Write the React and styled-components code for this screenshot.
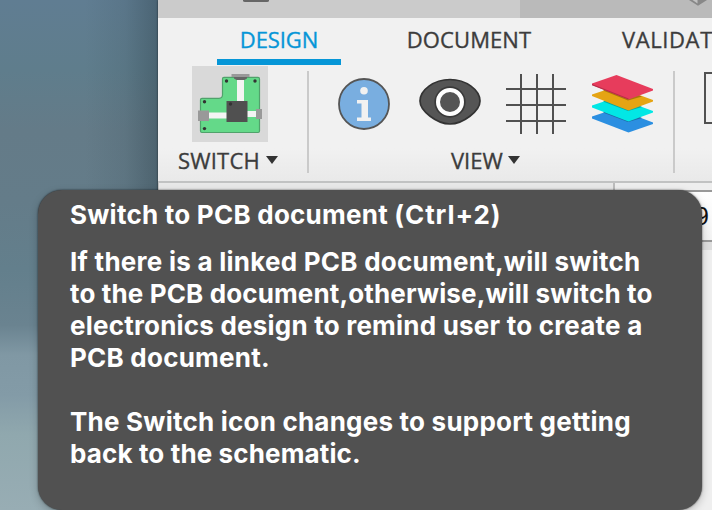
import React from 'react';
import styled, { createGlobalStyle } from 'styled-components';

const GlobalStyle = createGlobalStyle`
  * { box-sizing: border-box; }
  body { margin: 0; overflow: hidden; }
`;

const Desktop = styled.div`
  position: relative;
  display: flex;
  width: 712px;
  height: 510px;
  overflow: hidden;
  font-family: 'Open Sans', 'Noto Sans', sans-serif;
  color: #3c3c3c;
  background:
    linear-gradient(90deg, rgba(45, 65, 75, 0) 85px, rgba(45, 65, 75, 0.12) 125px, rgba(45, 65, 75, 0.42) 158px),
    linear-gradient(180deg, #607d92 0, #5f7d8c 70px, #647b88 130px, #647c89 200px, #637f8c 270px, #6a8390 325px, #8098a4 355px, #839ba7 395px, #90a8ae 435px, #98adb4 510px);
`;

const Window = styled.div`
  display: flex;
  flex-direction: column;
  width: 554px;
  height: 510px;
  margin-left: auto;
  background: #efefef;
  box-shadow: 0 0 2px rgba(0, 0, 0, 0.6);
`;

const TitleBar = styled.div`
  display: flex;
  height: 18px;
  flex: none;
  overflow: hidden;
`;

const TitleTab = styled.div`
  display: flex;
  width: ${(p) => p.$width}px;
  padding-left: ${(p) => p.$inset}px;
  background: ${(p) => (p.$active ? '#cbcbcb' : '#bababa')};
`;

const Ribbon = styled.div`
  display: flex;
  flex-direction: column;
  height: 163px;
  flex: none;
  overflow: hidden;
  background: linear-gradient(180deg, #f1f1f1 80%, #e9e9e9 100%);
  -webkit-text-stroke: 0.35px currentColor;
`;

const TabList = styled.div`
  display: flex;
  height: 47px;
  flex: none;
  padding-left: 59px;
`;

const Tab = styled.div`
  flex: none;
  width: ${(p) => p.$width}px;
  height: 47px;
  margin-right: ${(p) => p.$gap}px;
  padding-top: 6px;
  text-align: ${(p) => p.$align || 'center'};
  font-size: 22px;
  line-height: 31px;
  letter-spacing: ${(p) => p.$spacing || 0}px;
  white-space: nowrap;
  color: ${(p) => (p.$active ? '#0696d7' : '#3c3c3c')};
  border-bottom: 6px solid ${(p) => (p.$active ? '#0696d7' : 'transparent')};
`;

const Groups = styled.div`
  display: flex;
  height: 116px;
  flex: none;
`;

const Group = styled.div`
  display: flex;
  flex-direction: column;
  flex: none;
  width: ${(p) => p.$width}px;
  padding: 1px 0 0 ${(p) => p.$inset}px;
`;

const IconRow = styled.div`
  display: flex;
  align-items: center;
  height: 76px;
`;

const SwitchButton = styled.button`
  display: block;
  width: 76px;
  height: 76px;
  padding: 0;
  border: 0;
  background: #d9d9d9;
`;

const Icon = styled.svg`
  display: block;
  flex: none;
  margin-left: ${(p) => p.$gap || 0}px;
  margin-bottom: ${(p) => p.$lift || 0}px;
`;

const GroupLabel = styled.div`
  display: flex;
  align-items: center;
  gap: ${(p) => p.$gap}px;
  margin: 3px 0 0 ${(p) => p.$shift}px;
  font-size: 22px;
  line-height: 31px;
  letter-spacing: ${(p) => p.$spacing || 0}px;
`;

const Caret = styled.span`
  width: 0;
  height: 0;
  margin-top: -1px;
  border: solid transparent;
  border-width: 8px 6px 0;
  border-top-color: #333;
`;

const Divider = styled.div`
  flex: none;
  width: 2px;
  height: 102px;
  margin-top: 6px;
  background: #cacaca;
`;

const Workspace = styled.div`
  display: flex;
  height: 69px;
  flex: none;
  border-top: 2px solid #c1c2c2;
`;

const BrowserPanel = styled.div`
  width: 457px;
  border-right: 2px solid #bcbcbc;
  border-left: 1px solid #c4c4c4;
  background: #e8e8e8;
`;

const CommandBar = styled.div`
  flex: 1;
  padding-top: 7px;
  background: linear-gradient(180deg, #eeeeee 59px, #dedede 59px);
`;

const CommandField = styled.div`
  display: flex;
  justify-content: flex-end;
  height: 52px;
  padding: 10px 3px 0 0;
  border: solid #999;
  border-width: 2px 0;
  background: linear-gradient(180deg, #fff, #f3f3f3);
  color: #111;
  font-family: 'Liberation Sans', Arial, sans-serif;
  font-size: 25px;
  line-height: 29px;
`;

const Tooltip = styled.div`
  position: absolute;
  left: 38px;
  top: 190px;
  width: 664px;
  height: 320px;
  padding: 9px 0 0 32px;
  border-radius: 24px;
  background: #515151;
  box-shadow: 0 0 2px rgba(0, 0, 0, 0.7), 0 3px 9px rgba(0, 0, 0, 0.22);
  color: #fff;
  font-family: Inter, sans-serif;
  font-size: 26px;
  font-weight: 700;
  line-height: 32px;
  white-space: nowrap;
`;

const TooltipTitle = styled.div`
  margin-bottom: 15px;
  letter-spacing: 0.24px;
`;

const Shortcut = styled.span`
  letter-spacing: 0.9px;
`;

const Paragraph = styled.div`
  margin-bottom: 32px;
`;

const Line = styled.div`
  letter-spacing: ${(p) => p.$spacing}px;
`;

const PcbIcon = () => (
  <Icon width="76" height="76" viewBox="0 0 76 76">
    <path
      d="M32 11.300H66A1.500 1.500 0 0 1 67.500 12.800V65A1.500 1.500 0 0 1 66 66.500H10A1.500 1.500 0 0 1 8.500 65V33.800A1.500 1.500 0 0 1 10 32.300H27Q30.500 32.300 30.500 28.800V12.800A1.500 1.500 0 0 1 32 11.300z"
      fill="#64d989"
      stroke="#50a26b"
      strokeWidth="1.2"
    />
    <path d="M45 14h7v22h-7zM16 46.500h19v6H16zM55 45h9v6h-9z" fill="#f4f4f4" />
    <path d="M39.500 8h18v3h-18zM6 44.500h11v10.500H6zM64 43h6v10h-6z" fill="#999" />
    <path d="M42 11h13v1.500L52.500 14h-8L42 12.500z" fill="#666" />
    <path d="M34.500 35h21v21h-21z" fill="#505050" />
    <g fill="#333">
      <circle cx="34.500" cy="15" r="1.700" />
      <circle cx="63" cy="15" r="1.700" />
      <circle cx="12.500" cy="35.700" r="1.700" />
      <circle cx="12.500" cy="62.600" r="1.700" />
      <circle cx="38.500" cy="38" r="1.700" />
    </g>
  </Icon>
);

const InfoIcon = () => (
  <Icon width="52" height="52" viewBox="0 0 52 52">
    <circle cx="26" cy="26" r="25" fill="#79aee0" stroke="#555" strokeWidth="1.800" />
    <circle cx="26" cy="12.700" r="3.800" fill="#f1f1f1" />
    <path d="M19 22h11v17.500h3V43H19v-3.500h4.500V25.500H19z" fill="#f1f1f1" />
  </Icon>
);

const EyeIcon = () => (
  <Icon $gap={29} $lift={4} width="62" height="48" viewBox="0 0 62 48">
    <path
      d="M31 1.500C47 1.500 61 12 61 23C61 33 44 46 31 46C18 46 1 33 1 23C1 12 15 1.500 31 1.500z"
      fill="#555"
      stroke="#333"
      strokeWidth="1.700"
    />
    <circle cx="31" cy="24" r="15.700" fill="#3a3a3a" />
    <circle cx="31" cy="24" r="12" fill="#555" stroke="#fff" strokeWidth="4" />
  </Icon>
);

const GridIcon = () => (
  <Icon $gap={25} width="60" height="60" viewBox="0 0 60 60">
    <path d="M15 0v60M31 0v60M47 0v60M0 15h60M0 31h60M0 47h60" stroke="#515151" strokeWidth="2" />
  </Icon>
);

const LayersIcon = () => (
  <Icon $gap={25.5} width="61" height="58" viewBox="0 0 61 58">
    <path d="M0 41.500L24 33.500 61 47.500V49L36.500 57.500 0 43.500z" fill="#2b8fe1" />
    <path d="M11 37.500L36 47 50 43 36 37 24 33.500z" fill="#2069a3" />
    <path d="M0 30.500L24 22.500 61 36V37.500L36.500 46.500 0 32.500z" fill="#02e7e5" />
    <path d="M11 26.500L36 36 50 32 36 26 24 22.500z" fill="#02a9a4" />
    <path d="M0 19.500L24 11.500 61 25V26.500L36.500 35.500 0 21z" fill="#e5a413" />
    <path d="M11 15.500L36 25.500 50 21.500 36 16 24 11.500z" fill="#a8780d" />
    <path d="M0 8.500L24.500 0 61 14V15.500L36.500 24.500 0 10z" fill="#e73c5c" />
    <path d="M0 9L36.500 23.500V24.500L0 10.200z" fill="#b62c47" />
  </Icon>
);

export default function App() {
  return (
    <Desktop>
      <GlobalStyle />
      <Window>
        <TitleBar>
          <TitleTab $active $width={362} $inset={85}>
            <Icon width="26" height="3" viewBox="0 0 26 3">
              <path d="M0 0h26v.5Q26 2 24 2H2Q0 2 0 .5z" fill="#666" />
            </Icon>
          </TitleTab>
          <TitleTab $width={192} $inset={169}>
            <Icon width="20" height="7" viewBox="0 0 20 7">
              <path d="M0 0L9 5.700 18 0z" fill="#888" />
              <path d="M3.500 0H8.500V3.500z" fill="#c2c2c2" />
            </Icon>
          </TitleTab>
        </TitleBar>
        <Ribbon>
          <TabList>
            <Tab $active $width={124} $gap={65} $spacing={-0.1}>DESIGN</Tab>
            <Tab $width={126} $gap={90} $spacing={0.1}>DOCUMENT</Tab>
            <Tab $width={100} $gap={0} $spacing={0.6} $align="left">VALIDAT</Tab>
          </TabList>
          <Groups>
            <Group $width={149} $inset={34}>
              <SwitchButton aria-label="Switch">
                <PcbIcon />
              </SwitchButton>
              <GroupLabel $shift={-14} $gap={6} $spacing={0.2}>
                SWITCH
                <Caret />
              </GroupLabel>
            </Group>
            <Divider />
            <Group $width={364} $inset={29}>
              <IconRow>
                <InfoIcon />
                <EyeIcon />
                <GridIcon />
                <LayersIcon />
              </IconRow>
              <GroupLabel $shift={113} $gap={5}>
                VIEW
                <Caret />
              </GroupLabel>
            </Group>
            <Divider />
            <Group $width={40} $inset={29}>
              <IconRow>
                <Icon width="20" height="64" viewBox="0 0 20 64">
                  <path d="M20 1H1v50h19" fill="none" stroke="#515151" strokeWidth="2" />
                </Icon>
              </IconRow>
            </Group>
          </Groups>
        </Ribbon>
        <Workspace>
          <BrowserPanel />
          <CommandBar>
            <CommandField>9</CommandField>
          </CommandBar>
        </Workspace>
      </Window>
      <Tooltip role="tooltip">
        <TooltipTitle>
          Switch to PCB document <Shortcut>(Ctrl+2)</Shortcut>
        </TooltipTitle>
        <Paragraph>
          <Line $spacing={0.25}>If there is a linked PCB document,will switch</Line>
          <Line $spacing={0.13}>to the PCB document,otherwise,will switch to</Line>
          <Line $spacing={0.21}>electronics design to remind user to create a</Line>
          <Line $spacing={0.23}>PCB document.</Line>
        </Paragraph>
        <Paragraph>
          <Line $spacing={0.22}>The Switch icon changes to support getting</Line>
          <Line $spacing={0.13}>back to the schematic.</Line>
        </Paragraph>
      </Tooltip>
    </Desktop>
  );
}
